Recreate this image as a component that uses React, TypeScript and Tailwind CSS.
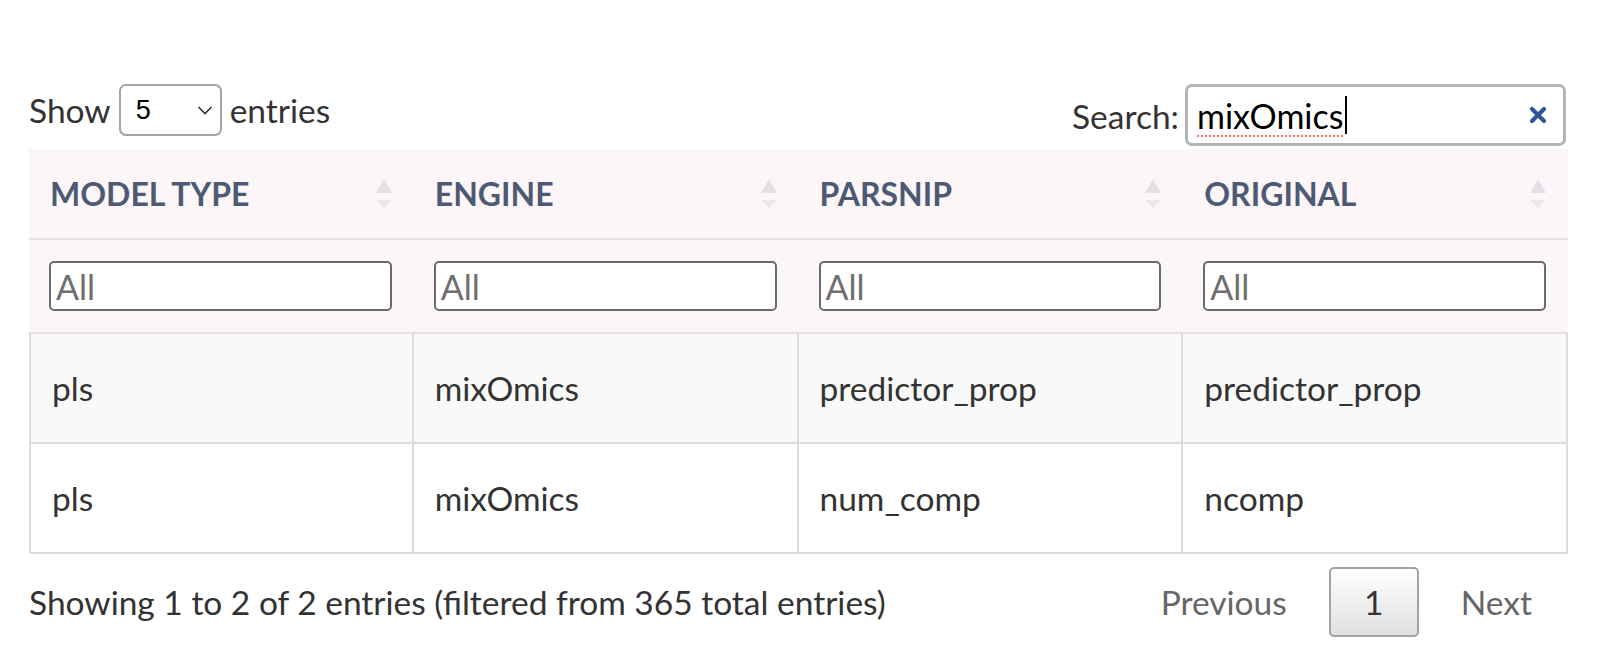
import React from "react";

interface Row {
  model: string;
  engine: string;
  parsnip: string;
  original: string;
}

const columns = ["MODEL TYPE", "ENGINE", "PARSNIP", "ORIGINAL"];

const rows: Row[] = [
  { model: "pls", engine: "mixOmics", parsnip: "predictor_prop", original: "predictor_prop" },
  { model: "pls", engine: "mixOmics", parsnip: "num_comp", original: "ncomp" },
];

const SortIcon = () => (
  <svg width="16" height="30" viewBox="0 0 16 30" className="absolute right-[22px] top-1/2 -translate-y-1/2">
    <polygon points="8,0 16,14 0,14" fill="#e3e0e7" />
    <polygon points="0,21 16,21 8,29" fill="#e9e7ee" />
  </svg>
);

export default function App() {
  return (
    <div className="min-h-screen bg-white font-['Lato','Noto_Sans',sans-serif] text-[#333]">
      <div className="ml-[29px] w-[1539px] pt-[84px]">
        {/* length + search controls */}
        <div className="flex h-[65px] items-start justify-between">
          <div className="flex h-[52px] items-center gap-[8px] text-[33.5px]">
            <span>Show</span>
            <div className="relative flex h-[52px] w-[103px] items-center rounded-[7px] border-2 border-[#a3a3a3] bg-white pl-[15px]">
              <span className="font-['Liberation_Sans',sans-serif] text-[27px] text-black">5</span>
              <svg width="16" height="10" viewBox="0 0 16 10" className="absolute right-[7px] top-1/2 -translate-y-1/2">
                <path d="M1.5 2 L8 8.5 L14.5 2" fill="none" stroke="#333" strokeWidth="1.6" />
              </svg>
            </div>
            <span>entries</span>
          </div>
          <div className="mr-[2px] flex items-baseline gap-[6px] text-[33.5px]">
            <span>Search:</span>
            <div className="relative flex h-[62px] w-[381px] items-center rounded-[7px] border-[3px] border-[#b4b4b4] bg-white pl-[9px]">
              <span className="text-[34px] text-black underline decoration-[#ff6b6b] decoration-dotted decoration-2 underline-offset-[7px]">
                mixOmics
              </span>
              <span className="ml-[1px] h-[38px] w-[2px] bg-black" />
              <svg width="18" height="18" viewBox="0 0 18 18" className="absolute right-[16px] top-1/2 -translate-y-1/2">
                <path d="M3 3 L15 15 M15 3 L3 15" stroke="#2f5597" strokeWidth="4.2" strokeLinecap="round" />
              </svg>
            </div>
          </div>
        </div>

        {/* table */}
        <table className="w-[1539px] table-fixed border-separate border-spacing-0">
          <thead>
            <tr>
              {columns.map((c) => (
                <th
                  key={c}
                  className="relative h-[91px] border-b-2 border-[#e7e1e4] bg-[#fcf6f8] px-[21px] text-left align-middle text-[32px] font-bold text-[#4e5a74]"
                >
                  {c}
                  <SortIcon />
                </th>
              ))}
            </tr>
            <tr>
              {columns.map((c) => (
                <th
                  key={c}
                  className="h-[94px] border-b-2 border-[#e7e1e4] bg-[#fcf6f8] pl-[20px] pr-[22px] align-middle font-normal"
                >
                  <div className="flex h-[50px] w-full items-center rounded-[5px] border-2 border-[#6b6b6b] bg-white pl-[5px] text-left text-[34px] text-[#6f6f6f]">
                    All
                  </div>
                </th>
              ))}
            </tr>
          </thead>
          <tbody>
            {rows.map((r, i) => (
              <tr key={i} className={i % 2 === 0 ? "bg-[#f9f9f9]" : "bg-white"}>
                {[r.model, r.engine, r.parsnip, r.original].map((v, j) => (
                  <td
                    key={j}
                    className={`h-[110px] border-b-2 border-r-2 border-[#dddddd] px-[21px] align-middle text-[33.5px] ${
                      j === 0 ? "border-l-2" : ""
                    }`}
                  >
                    {v}
                  </td>
                ))}
              </tr>
            ))}
          </tbody>
        </table>

        {/* info + pagination */}
        <div className="mt-[13px] flex items-center justify-between text-[33.5px]">
          <span>Showing 1 to 2 of 2 entries (filtered from 365 total entries)</span>
          <div className="flex items-center gap-[6px]">
            <span className="px-[36px] text-[#666]">Previous</span>
            <span className="flex h-[70px] w-[90px] items-center justify-center rounded-[5px] border-2 border-[#a3a3a3] bg-gradient-to-b from-white to-[#e0e0e0] text-[#333]">
              1
            </span>
            <span className="px-[36px] text-[#666]">Next</span>
          </div>
        </div>
      </div>
    </div>
  );
}
